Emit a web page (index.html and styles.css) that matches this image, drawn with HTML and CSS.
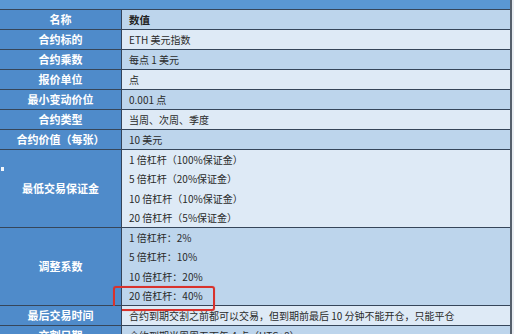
FILE: index.html
```
<!DOCTYPE html>
<html lang="zh">
<head>
<meta charset="utf-8">
<link rel="stylesheet" href="styles.css">
</head>
<body>
<div class="page">
<table class="spec">
  <colgroup><col class="c-name"><col class="c-val"></colgroup>
  <tr class="title-row"><td colspan="2" class="title"></td></tr>
  <tr class="mid head"><th>名称</th><td>数值</td></tr>
  <tr class="light"><th>合约标的</th><td>ETH 美元指数</td></tr>
  <tr class="mid"><th>合约乘数</th><td>每点 1 美元</td></tr>
  <tr class="light"><th>报价单位</th><td>点</td></tr>
  <tr class="mid"><th>最小变动价位</th><td>0.001 点</td></tr>
  <tr class="light"><th>合约类型</th><td>当周、次周、季度</td></tr>
  <tr class="mid"><th>合约价值（每张）</th><td>10 美元</td></tr>
  <tr class="light multi">
    <th><span class="dot"></span>最低交易保证金</th>
    <td>
      <div class="line">1 倍杠杆（100%保证金）</div>
      <div class="line">5 倍杠杆（20%保证金）</div>
      <div class="line">10 倍杠杆（10%保证金）</div>
      <div class="line">20 倍杠杆（5%保证金）</div>
    </td>
  </tr>
  <tr class="mid multi">
    <th>调整系数</th>
    <td>
      <div class="line">1 倍杠杆：2%</div>
      <div class="line">5 倍杠杆：10%</div>
      <div class="line">10 倍杠杆：20%</div>
      <div class="line marked">20 倍杠杆：40%<span class="highlight"></span></div>
    </td>
  </tr>
  <tr class="light"><th>最后交易时间</th><td>合约到期交割之前都可以交易，但到期前最后 10 分钟不能开仓，只能平仓</td></tr>
  <tr class="mid"><th>交割日期</th><td>合约到期当周周五下午 4 点（UTC+8）</td></tr>
</table>
</div>
</body>
</html>
```
FILE: styles.css
```
html, body {
  margin: 0;
  padding: 0;
  background: #e9edf2;
}
.page {
  width: 514px;
  height: 334px;
  overflow: hidden;
}
.spec {
  width: 512px;
  border-collapse: separate;
  border-spacing: 0;
  table-layout: fixed;
  font-family: "Noto Sans CJK SC", "Noto Sans", sans-serif;
  border-right: 2px solid #56606c;
}
.c-name { width: 122px; }
.c-val { width: 388px; }
.spec th, .spec td {
  padding: 0;
  border-bottom: 1px solid #36465a;
  line-height: 19px;
  vertical-align: middle;
}
.title {
  height: 9px;
  line-height: 9px;
  background: #5a98d4;
}
.spec th {
  border-right: 1px solid #34445a;
  background: #4f8bca;
  color: #ffffff;
  font-size: 11px;
  font-weight: 700;
  text-align: center;
  position: relative;
}
.spec td {
  padding-left: 7px;
  font-size: 10px;
  color: #2a2a2a;
  white-space: nowrap;
  overflow: hidden;
}
.spec tr.title-row td {
  padding: 0;
}
.light td { background: #deeaf6; }
.mid td { background: #bdd5ec; }
.head td {
  font-weight: 700;
  font-size: 10.5px;
  color: #222;
}
.multi td {
  line-height: 19.25px;
  overflow: visible;
}
.line {
  height: 19.25px;
}
.marked {
  position: relative;
}
.highlight {
  position: absolute;
  left: -16px;
  top: 0;
  width: 98px;
  height: 21px;
  border: 2px solid #d8322c;
  border-radius: 3px;
  box-shadow: 0 0 1px rgba(216, 50, 44, 0.6);
}
.dot {
  position: absolute;
  left: 1px;
  top: 17px;
  width: 3px;
  height: 4px;
  background: #f4f7fb;
}
```
